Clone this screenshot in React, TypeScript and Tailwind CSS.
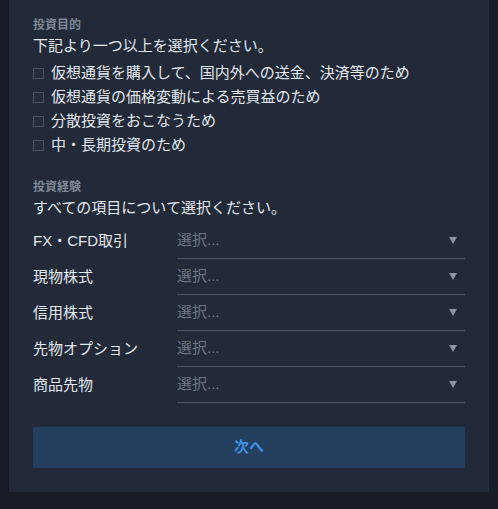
import React from "react";

const font = { fontFamily: '"Liberation Sans", "Noto Sans CJK JP", "Noto Sans", sans-serif' };

function Arrow() {
  return (
    <svg width="8" height="7" viewBox="0 0 8 7" className="shrink-0">
      <polygon points="0,0 8,0 4,7" fill="#8a93a1" />
    </svg>
  );
}

export default function App() {
  const purposes = [
    "仮想通貨を購入して、国内外への送金、決済等のため",
    "仮想通貨の価格変動による売買益のため",
    "分散投資をおこなうため",
    "中・長期投資のため",
  ];
  const experiences = ["FX・CFD取引", "現物株式", "信用株式", "先物オプション", "商品先物"];
  return (
    <div className="w-[498px] h-[509px] bg-[#171c27] overflow-hidden" style={font}>
      <div className="ml-[9px] w-[480px] bg-[#222a39] pl-[24px] pr-[24px] pt-[17px] pb-[24px] flex flex-col">
        <div className="text-[12px] leading-[16px] font-bold text-[#7f8896]">投資目的</div>
        <div className="mt-[2px] text-[15px] leading-[22px] text-[#e3e7ee]">下記より一つ以上を選択ください。</div>
        <div className="mt-[4px] flex flex-col">
          {purposes.map((p) => (
            <label key={p} className="flex items-center h-[24px] gap-[7px]">
              <span className="w-[11px] h-[11px] border border-[#4a5261] bg-[#252d3c] shrink-0" />
              <span className="text-[15px] leading-[24px] text-[#e3e7ee]">{p}</span>
            </label>
          ))}
        </div>
        <div className="mt-[22px] text-[12px] leading-[16px] font-bold text-[#7f8896]">投資経験</div>
        <div className="mt-[2px] text-[15px] leading-[22px] text-[#e3e7ee]">すべての項目について選択ください。</div>
        <div className="mt-[4px] flex flex-col">
          {experiences.map((e) => (
            <div key={e} className="flex h-[36px]">
              <div className="w-[144px] flex items-center text-[15px] text-[#e3e7ee]">{e}</div>
              <div className="flex-1 flex items-center justify-between border-b border-[#4d5665] pr-[8px]">
                <span className="text-[15px] text-[#6c7585]">選択...</span>
                <Arrow />
              </div>
            </div>
          ))}
        </div>
        <button className="mt-[24px] h-[41px] w-full bg-[#243f5e] text-[#3d8fe3] text-[15px] font-bold flex items-center justify-center">
          次へ
        </button>
      </div>
    </div>
  );
}
